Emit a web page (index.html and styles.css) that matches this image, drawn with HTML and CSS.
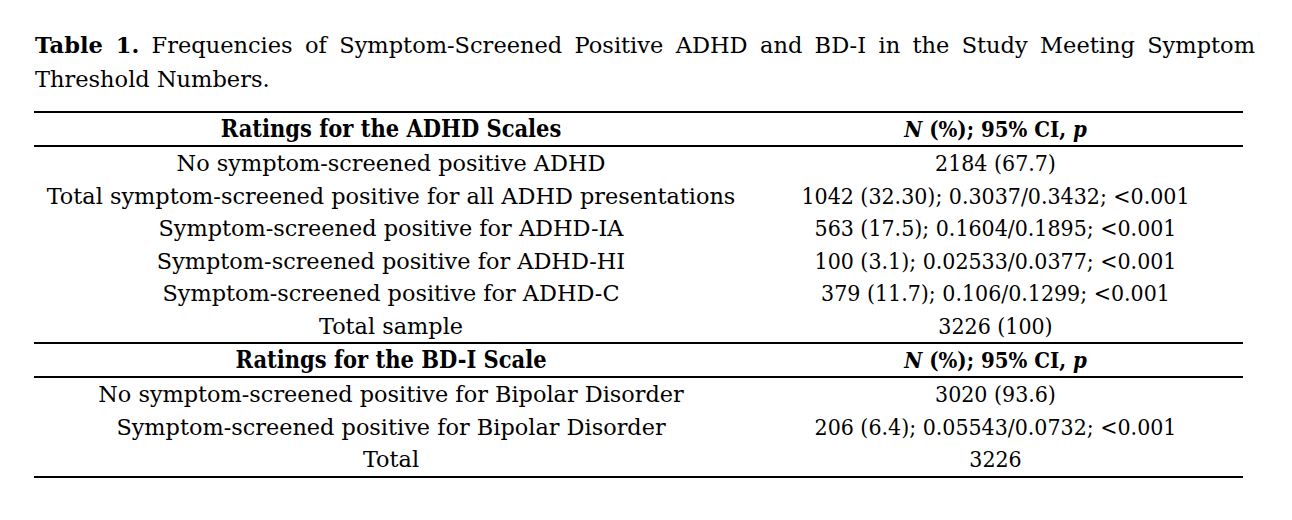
FILE: index.html
```html
<!DOCTYPE html>
<html lang="en">
<head>
<meta charset="utf-8">
<title>Table 1</title>
<link rel="stylesheet" href="styles.css">
</head>
<body>
<div class="page">
  <p class="caption"><b>Table 1.</b> Frequencies of Symptom-Screened Positive ADHD and BD-I in the Study Meeting Symptom Threshold Numbers.</p>
  <table class="data">
    <colgroup><col class="c1"><col class="c2"></colgroup>
    <tbody>
      <tr class="head"><td class="lab">Ratings for the ADHD Scales</td><td class="val"><i>N</i> (%); 95% CI, <i>p</i></td></tr>
      <tr class="row"><td class="lab">No symptom-screened positive ADHD</td><td class="val">2184 (67.7)</td></tr>
      <tr class="row"><td class="lab">Total symptom-screened positive for all ADHD presentations</td><td class="val">1042 (32.30); 0.3037/0.3432; &lt;0.001</td></tr>
      <tr class="row"><td class="lab">Symptom-screened positive for ADHD-IA</td><td class="val">563 (17.5); 0.1604/0.1895; &lt;0.001</td></tr>
      <tr class="row"><td class="lab">Symptom-screened positive for ADHD-HI</td><td class="val">100 (3.1); 0.02533/0.0377; &lt;0.001</td></tr>
      <tr class="row"><td class="lab">Symptom-screened positive for ADHD-C</td><td class="val">379 (11.7); 0.106/0.1299; &lt;0.001</td></tr>
      <tr class="row"><td class="lab">Total sample</td><td class="val">3226 (100)</td></tr>
      <tr class="head"><td class="lab">Ratings for the BD-I Scale</td><td class="val"><i>N</i> (%); 95% CI, <i>p</i></td></tr>
      <tr class="row"><td class="lab">No symptom-screened positive for Bipolar Disorder</td><td class="val">3020 (93.6)</td></tr>
      <tr class="row"><td class="lab">Symptom-screened positive for Bipolar Disorder</td><td class="val">206 (6.4); 0.05543/0.0732; &lt;0.001</td></tr>
      <tr class="row"><td class="lab">Total</td><td class="val">3226</td></tr>
    </tbody>
  </table>
</div>
</body>
</html>
```
FILE: styles.css
```css
html, body {
  margin: 0;
  padding: 0;
  background: #ffffff;
}
body {
  font-family: "DejaVu Serif", "Liberation Serif", serif;
  color: #000000;
  width: 1292px;
  height: 520px;
  overflow: hidden;
}
.page {
  padding: 28px 37px 0 34px;
}
.caption {
  margin: 0 0 15px 1px;
  font-size: 22.5px;
  line-height: 34px;
  text-align: justify;
}
.data {
  width: 1209px;
  border-collapse: collapse;
  border-top: 2px solid #000;
  border-bottom: 2px solid #000;
}
.c1 { width: 714px; }
.c2 { width: 495px; }
.data td {
  padding: 0;
  text-align: center;
  line-height: 26px;
  white-space: nowrap;
}
.data tr.row td {
  height: 32.5px;
}
.data tr.row td.lab {
  font-size: 22.4px;
}
.data tr.row td.val {
  font-size: 22.9px;
  font-stretch: condensed;
}
.data tr.head td {
  height: 32px;
  font-weight: bold;
  font-stretch: condensed;
  border-top: 2px solid #000;
  border-bottom: 2px solid #000;
}
.data tr.head td.lab {
  font-size: 23.4px;
}
.data tr.head td.val {
  font-size: 22px;
}
```
